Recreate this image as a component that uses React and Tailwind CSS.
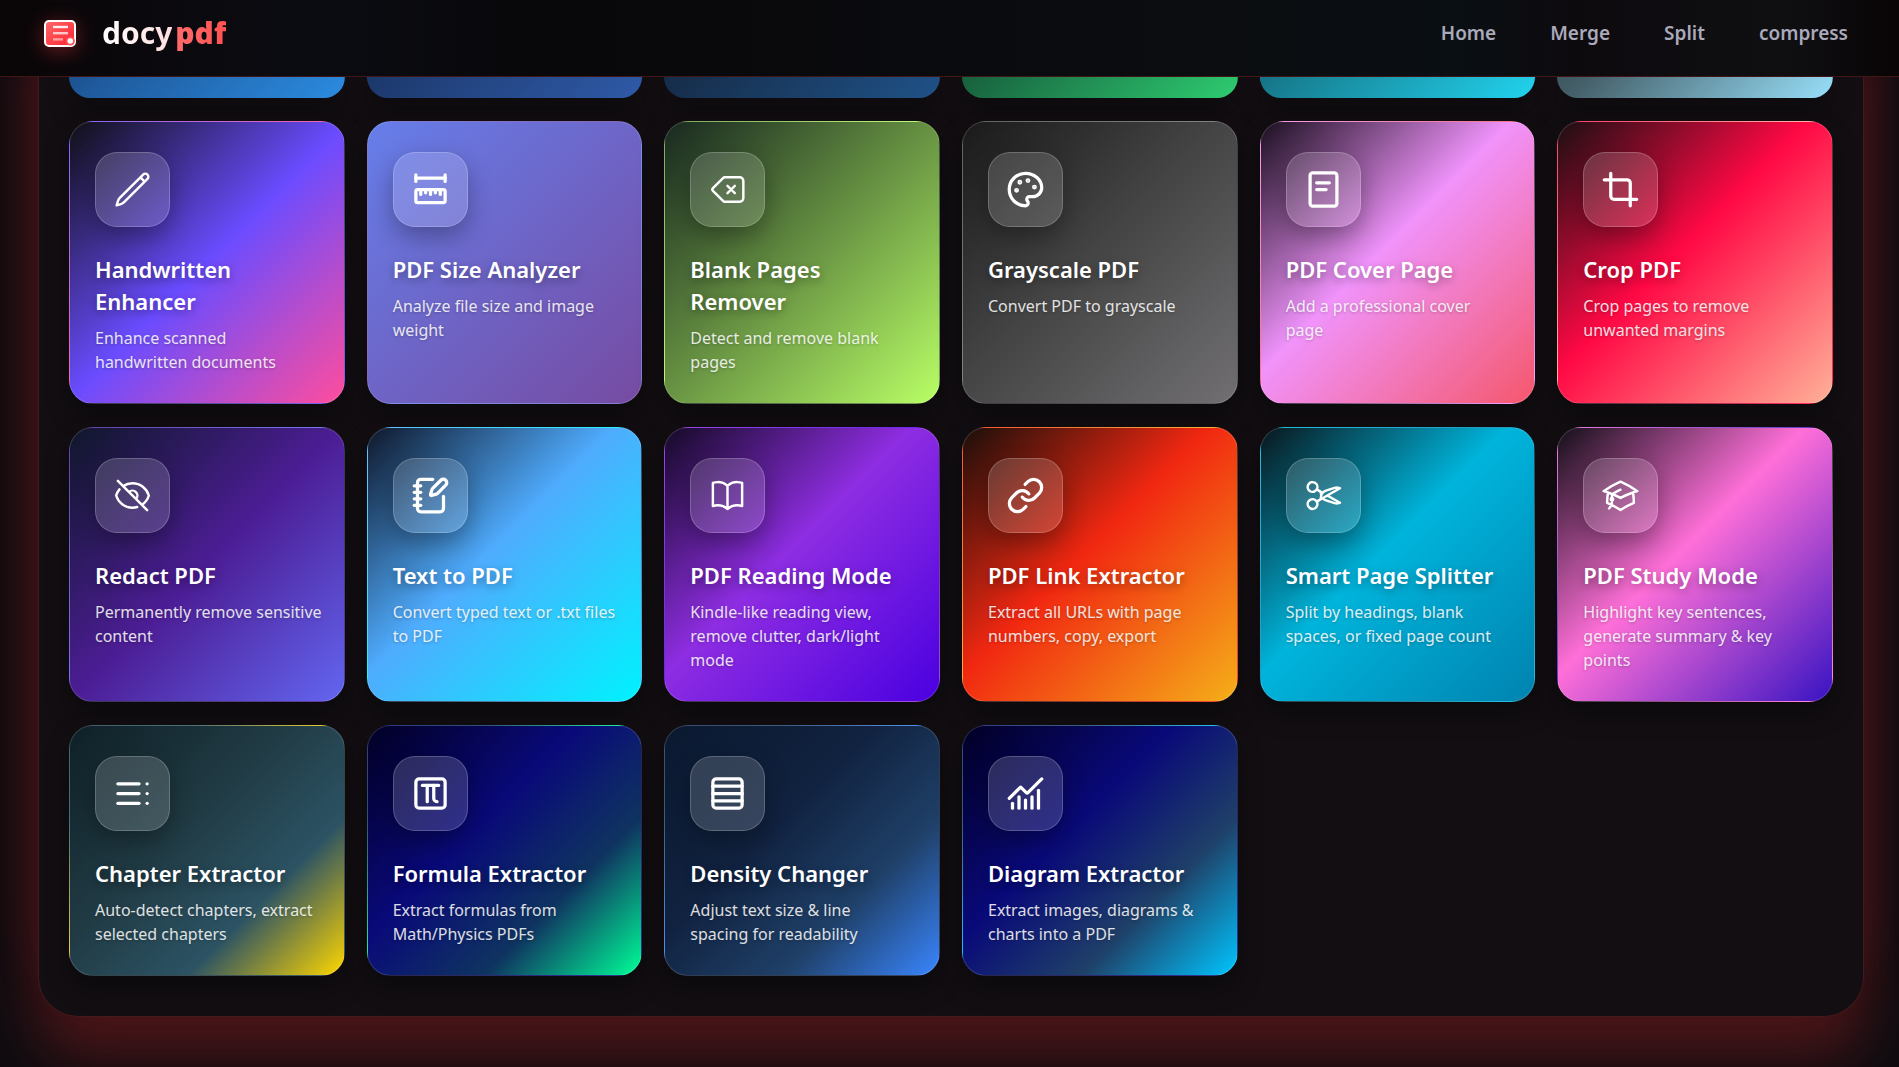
import React from "react";
import {
  HiOutlineAcademicCap,
  HiOutlineBackspace,
  HiOutlineBookOpen,
  HiOutlineEyeSlash,
  HiOutlinePencil,
  HiOutlineScissors,
} from "react-icons/hi2";
import {
  LuChartNoAxesCombined,
  LuCrop,
  LuLink,
  LuNotebookPen,
  LuPalette,
  LuRows4,
  LuSquarePi,
  LuTableOfContents,
} from "react-icons/lu";
import { TbRulerMeasure } from "react-icons/tb";

const navLinks = ["Home", "Merge", "Split", "compress"];

// bottom edges of the row that is scrolled under the header
const scrolledRow = [
  "bg-[linear-gradient(135deg,#0f172a,#1f5a9c_50%,#2b8be0)]",
  "bg-[linear-gradient(135deg,#0f172a,#1e3c72_50%,#2f5aa8)]",
  "bg-[linear-gradient(135deg,#0f172a,#17304f_50%,#1f5288)]",
  "bg-[linear-gradient(135deg,#0b1a14,#1a6b43_50%,#2ecc71)]",
  "bg-[linear-gradient(135deg,#0b1a20,#177f92_50%,#22d3ee)]",
  "bg-[linear-gradient(135deg,#10181c,#45606a_50%,#98e0fa)]",
];

function CoverPageIcon({ className }) {
  return (
    <svg
      viewBox="0 0 24 24"
      fill="none"
      stroke="currentColor"
      strokeWidth="2"
      strokeLinecap="round"
      strokeLinejoin="round"
      className={className}
      aria-hidden="true"
    >
      <rect x="3.75" y="1.75" width="16.5" height="20.5" rx="1.6" />
      <path d="M7.8 7.9h7.8M7.8 12h5.8" />
    </svg>
  );
}

const tools = [
  {
    title: "Handwritten Enhancer",
    text: "Enhance scanned\nhandwritten documents",
    icon: HiOutlinePencil,
    bg: "bg-[linear-gradient(135deg,#0f0f14,#6a4cff_50%,#ff4d9d)]",
  },
  {
    title: "PDF Size Analyzer",
    text: "Analyze file size and image weight",
    icon: TbRulerMeasure,
    bg: "bg-[linear-gradient(135deg,#667eea,#764ba2)]",
  },
  {
    title: "Blank Pages Remover",
    text: "Detect and remove blank pages",
    icon: HiOutlineBackspace,
    bg: "bg-[linear-gradient(135deg,#182820,#b9ff66)]",
  },
  {
    title: "Grayscale PDF",
    text: "Convert PDF to grayscale",
    icon: LuPalette,
    bg: "bg-[linear-gradient(135deg,#1a1a1a,#434343_45%,#716f72)]",
  },
  {
    title: "PDF Cover Page",
    text: "Add a professional cover\npage",
    icon: CoverPageIcon,
    bg: "bg-[linear-gradient(135deg,#1a0f1f,#f093fb_45%,#f5576c)]",
  },
  {
    title: "Crop PDF",
    text: "Crop pages to remove unwanted margins",
    icon: LuCrop,
    bg: "bg-[linear-gradient(135deg,#1a0f12,#ff0844_45%,#ffb199)]",
  },
  {
    title: "Redact PDF",
    text: "Permanently remove sensitive content",
    icon: HiOutlineEyeSlash,
    bg: "bg-[linear-gradient(135deg,#0f172a,#4c1d95_50%,#6366f1)]",
  },
  {
    title: "Text to PDF",
    text: "Convert typed text or .txt files to PDF",
    icon: LuNotebookPen,
    bg: "bg-[linear-gradient(135deg,#0f172a,#4facfe_45%,#00f2fe)]",
  },
  {
    title: "PDF Reading Mode",
    text: "Kindle-like reading view, remove clutter, dark/light mode",
    icon: HiOutlineBookOpen,
    bg: "bg-[linear-gradient(135deg,#150a26,#8e2de2_45%,#4a00e0)]",
  },
  {
    title: "PDF Link Extractor",
    text: "Extract all URLs with page numbers, copy, export",
    icon: LuLink,
    bg: "bg-[linear-gradient(135deg,#1a0f0a,#f12711_45%,#f5af19)]",
  },
  {
    title: "Smart Page Splitter",
    text: "Split by headings, blank spaces, or fixed page count",
    icon: HiOutlineScissors,
    bg: "bg-[linear-gradient(135deg,#0a161c,#00b4db_45%,#0083b0)]",
  },
  {
    title: "PDF Study Mode",
    text: "Highlight key sentences, generate summary & key points",
    icon: HiOutlineAcademicCap,
    bg: "bg-[linear-gradient(135deg,#140f18,#ff6fd8_45%,#3813c2)]",
  },
  {
    title: "Chapter Extractor",
    text: "Auto-detect chapters, extract selected chapters",
    icon: LuTableOfContents,
    bg: "bg-[linear-gradient(135deg,#0f2027,#203a43_40%,#2c5364_70%,#ffd700)]",
  },
  {
    title: "Formula Extractor",
    text: "Extract formulas from Math/Physics PDFs",
    icon: LuSquarePi,
    bg: "bg-[linear-gradient(135deg,#020024,#090979_40%,#0f3460_70%,#00ff99)]",
  },
  {
    title: "Density Changer",
    text: "Adjust text size & line\nspacing for readability",
    icon: LuRows4,
    bg: "bg-[linear-gradient(135deg,#0a192f,#112240_40%,#1f4068_70%,#3a86ff)]",
  },
  {
    title: "Diagram Extractor",
    text: "Extract images, diagrams & charts into a PDF",
    icon: LuChartNoAxesCombined,
    bg: "bg-[linear-gradient(135deg,#020024,#090979_40%,#1f4068_70%,#00c6ff)]",
  },
];

function Logo() {
  return (
    <svg
      viewBox="0 0 32 27"
      className="h-[27px] w-8 drop-shadow-[0_4px_10px_rgba(255,60,60,0.4)]"
      aria-hidden="true"
    >
      <defs>
        <linearGradient id="logoFill" x1="0" y1="0" x2="1" y2="1">
          <stop offset="0" stopColor="#ff6b6b" />
          <stop offset="1" stopColor="#ff1f2d" />
        </linearGradient>
      </defs>
      <rect x="1" y="1" width="30" height="25" rx="4" fill="url(#logoFill)" stroke="#fff" strokeWidth="2" />
      <path d="M9 7h15" stroke="#fff" strokeOpacity="0.9" strokeWidth="2.4" />
      <path d="M9 13.2h15" stroke="#fff" strokeOpacity="0.7" strokeWidth="2.4" />
      <path d="M9 19.4h10" stroke="#fff" strokeOpacity="0.5" strokeWidth="2.4" />
      <circle cx="26.3" cy="21" r="4.6" fill="#ff5252" />
      <circle cx="26.3" cy="21" r="2.8" fill="#fff" />
    </svg>
  );
}

function ToolCard({ title, text, icon: Icon, bg }) {
  return (
    <a
      href="#"
      className={`block rounded-3xl border border-white/15 px-[25px] pt-[30px] pb-[29px] shadow-[0_12px_24px_rgba(0,0,0,0.35)] ${bg}`}
    >
      <span className="flex size-[75px] items-center justify-center rounded-[22px] border border-white/20 bg-white/16 shadow-[0_10px_24px_rgba(0,0,0,0.3)]">
        <Icon className="size-[39px] text-white" />
      </span>
      <h3 className="mt-[26px] text-[22px] leading-8 font-semibold text-white [text-shadow:0_3px_8px_rgba(0,0,0,0.35)]">
        {title}
      </h3>
      <p className="mt-[9px] -mr-2 text-base leading-6 whitespace-pre-line text-white/85 [text-shadow:0_1px_3px_rgba(0,0,0,0.25)]">
        {text}
      </p>
    </a>
  );
}

export default function App() {
  return (
    <div className="min-h-screen bg-[#0e0c10] pb-[51px] font-['Noto_Sans',sans-serif]">
      <header className="relative z-10 flex h-[77px] items-center justify-between border-b border-[#411617] bg-[linear-gradient(90deg,#0a0507,#0b0c12_16%,#08080b_28%,#0b0c0f_60%,#0a0f13_77%,#0d0a0e_83%,#0f0f12_94%,#090406)] pr-[51px] pb-[10px] pl-11">
        <a href="#" className="flex items-center gap-[26px]">
          <Logo />
          <span className="text-3xl leading-10">
            <span className="bg-linear-to-r from-white to-[#ffdede] bg-clip-text font-bold text-transparent">docy</span>
            <span className="ml-[3px] bg-linear-to-r from-[#ff6b6b] to-[#ff5252] bg-clip-text font-black text-transparent">
              pdf
            </span>
          </span>
        </a>
        <nav className="flex gap-[54px]">
          {navLinks.map((label) => (
            <a key={label} href="#" className="text-[19px] leading-7 font-semibold text-[#aaa9ba]">
              {label}
            </a>
          ))}
        </nav>
      </header>

      {/* panel reaches up behind the header so its glow runs the full height */}
      <main className="-mt-[77px] mr-[35px] ml-[38px] rounded-b-[40px] border border-t-0 border-[#431a1d] bg-[#120e12] px-[30px] pt-[77px] pb-10 shadow-[0_40px_60px_rgba(255,50,50,0.26),0_-40px_60px_rgba(255,50,50,0.12)]">
        <div className="mb-[23px] grid grid-cols-6 gap-[22px]">
          {scrolledRow.map((bg) => (
            <div
              key={bg}
              className={`h-[21px] rounded-b-3xl bg-[length:100%_251px] bg-bottom shadow-[0_12px_24px_rgba(0,0,0,0.35)] ${bg}`}
            />
          ))}
        </div>

        <div className="grid grid-cols-6 gap-x-[22px] gap-y-[23px]">
          {tools.map((tool) => (
            <ToolCard key={tool.title} {...tool} />
          ))}
        </div>
      </main>
    </div>
  );
}
